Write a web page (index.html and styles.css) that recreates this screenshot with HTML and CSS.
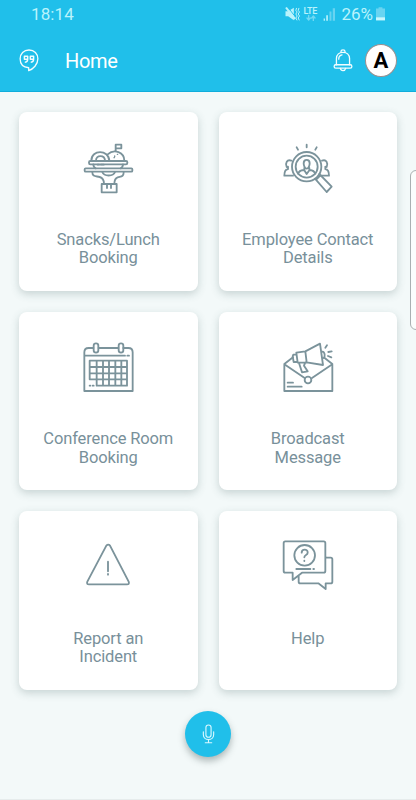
FILE: index.html
```html
<!DOCTYPE html>
<html lang="en">

<head>
    <meta charset="UTF-8">
    <meta name="viewport" content="width=device-width, initial-scale=1.0">
    <title>Home</title>
    <link rel="stylesheet" href="styles.css">
</head>

<body>
    <header class="header">
        <div class="status">
            <span class="time">18:14</span>
            <svg class="mute" viewBox="0 0 44 42">
                <path class="solid" d="M1 13h8L26 2v38L9 28H1z" />
                <path class="slash" d="M8 1l26 33" />
                <path class="solid" d="M0 3l5-3 27 34-5 4z" />
                <path d="M34 4l-2 6 4 5-4 6 4 6-4 6 3 6M41 4l-2 6 4 5-4 6 4 6-4 6 3 6" />
            </svg>
            <div class="network">
                <span>LTE</span>
                <svg viewBox="0 0 30 18">
                    <path d="M8 1v13M3 9l5 6 5-6M22 17V4M17 9l5-6 5 6" />
                </svg>
            </div>
            <svg class="signal" viewBox="0 0 38 40">
                <path d="M1 32h4v7H1zM9 22h5v17H9z" />
                <path class="dim" d="M19 11h6v28h-6zM29 1h7v38h-7z" />
            </svg>
            <span class="percent">26%</span>
            <svg class="battery" viewBox="0 0 28 42">
                <path class="dim" d="M8 0h12v4h8v27H0V4h8z" />
                <path d="M0 31h28v10H0z" />
            </svg>
        </div>
        <div class="toolbar">
            <svg class="quote" viewBox="0 0 60 70">
                <path d="M30 3C14 3 3 14 3 30s10 26 26 27v9c14-5 28-19 28-36C57 14 46 3 30 3z" />
                <path class="mark" d="M26 31H16v-9h10v9c0 5-3 8-7 9M44 31H34v-9h10v9c0 5-3 8-7 9" />
            </svg>
            <h1>Home</h1>
            <svg class="bell" viewBox="0 0 60 70">
                <path d="M10 48V29c0-12 9-19 20-19s20 7 20 19v19M24 10V7c0-6 12-6 12 0v3M17 31c0-8 4-12 10-13M22 59c2 9 14 9 16 0" />
                <rect x="3" y="48" width="54" height="10" rx="5" />
            </svg>
            <div class="avatar">A</div>
        </div>
    </header>

    <main class="cards">
        <div class="card">
            <svg class="icon" viewBox="0 0 228 228">
                <path d="M137 62V44h17v11h-17M64 92c0-34 52-34 54 0M78 92c0-18 26-18 27 0M113 73c20-18 50-6 50 19" />
                <rect x="57" y="93" width="115" height="10" rx="4" />
                <path d="M70 103c0 8 3 10 7 12M159 103c0 8-3 10-7 12M83 104h4M93 104h8" />
                <rect x="44" y="115" width="143" height="10" rx="3" />
                <path d="M67 127c0 14 11 11 22 14 10 3 13 10 13 21M161 127c0 14-8 12-18 15-8 3-10 9-10 20M97 126c5 14 33 14 38 0M95 162h45v25H95zM111 163v11M123 163v11" />
                <path class="dots" d="M134 78v2M142 73h1M132 83h1" />
            </svg>
            <p>Snacks/Lunch<br>Booking</p>
        </div>
        <div class="card">
            <svg class="icon" viewBox="0 0 228 228">
                <circle cx="110" cy="110" r="44" />
                <circle cx="110" cy="110" r="33" />
                <path d="M110 44v8M80 52l4 7M140 52l-4 7" />
                <path d="M101 100c0-14 18-14 18 0 0 8-4 16-9 16s-9-8-9-16zM103 114v7l7 11 8-11v-7M101 120c-9 1-15 5-17 11M119 120c9 1 15 5 17 11" />
                <path d="M64 92c-13-5-19 7-14 19M54 110v7c-8 1-11 7-11 20h26M156 92c13-5 19 7 14 19M166 110v7c8 1 11 7 11 20h-24" />
                <path d="M148 132l37 38-15 16-35-40M140 147l9-9" />
            </svg>
            <p>Employee Contact<br>Details</p>
        </div>
        <div class="card">
            <svg class="icon" viewBox="0 0 228 228">
                <path d="M70 54H56q-13 0-13 13v116h145V67q0-13-13-13h-15M86 54h59M43 77h122M172 77h5" />
                <rect x="71" y="40" width="14" height="28" rx="7" />
                <rect x="146" y="40" width="14" height="28" rx="7" />
                <path d="M59 148V92h112v75H80V92M99 92v75M117 92v75M136 92v75M154 92v75M59 111h112M59 130h112M59 148h112M59 167h2M68 167h3" />
            </svg>
            <p>Conference Room<br>Booking</p>
        </div>
        <div class="card">
            <svg class="icon" viewBox="0 0 228 228">
                <path d="M69 82L43 102v81h144v-81l-23-18M43 103l61 41M187 103l-61 41" />
                <circle cx="114" cy="150" r="10" />
                <path d="M79 68l27-4 44-23 9 64-49-8-27 1zM106 64l4 33M79 74h-9l-2 5 3 17h11M87 99l9 28 17-3-11-17 4-10M157 65c8 1 9 15 4 19M166 53l5-7M175 66l10-2M174 78l10 4M53 158h16M53 170h42" />
            </svg>
            <p>Broadcast<br>Message</p>
        </div>
        <div class="card">
            <svg class="icon" viewBox="0 0 228 228">
                <path d="M109 50L52 158q-3 8 5 8h114q8 0 5-8L120 50q-5-6-11 0z" />
                <path d="M114 98v29M114 135v2" />
            </svg>
            <p>Report an<br>Incident</p>
        </div>
        <div class="card">
            <svg class="icon" viewBox="0 0 228 228">
                <path d="M46 37h115q5 0 5 5v84q0 5-5 5H96l-28 22v-22H46q-5 0-5-5V42q0-5 5-5zM169 86h13q5 0 5 5v67q0 5-5 5h-15v17l-22-17H91q-5 0-5-5v-19" />
                <circle cx="104" cy="79" r="31" />
                <path d="M95 71c0-12 19-12 18 0 0 8-10 6-10 14M103 95v1M79 120h42M130 120h2" />
            </svg>
            <p>Help</p>
        </div>
    </main>

    <footer class="footer">
        <button class="mic" aria-label="Voice">
            <svg viewBox="0 0 40 62">
                <rect x="12" y="3" width="16" height="38" rx="8" />
                <path d="M4 24v9c0 20 32 20 32 0v-9M20 48v9M10 58h20" />
            </svg>
        </button>
    </footer>

    <div class="edge-handle"></div>
</body>

</html>
```
FILE: styles.css
```css
* {
    box-sizing: border-box;
}

body {
    margin: 0;
    height: 800px;
    overflow: hidden;
    position: relative;
    background-color: #f3f9f9;
    border-bottom: 1px solid #e6ecec;
    font-family: Roboto, "Liberation Sans", sans-serif;
    display: flex;
    flex-direction: column;
}

svg {
    display: block;
    fill: none;
    stroke-linecap: round;
    stroke-linejoin: round;
}

.header {
    height: 92px;
    background-color: #20bfea;
    border-bottom: 1px solid #10addb;
    color: #ffffff;
}

.status {
    height: 28px;
    padding: 0 31px;
    display: flex;
    align-items: center;
    color: #b9f3fc;
    font-size: 17px;
}

.time {
    margin-right: auto;
    letter-spacing: 0.1px;
}

.mute {
    width: 15px;
    height: 14px;
    margin-right: 3px;
    stroke: #b9f3fc;
    stroke-width: 3;
}

.mute .solid {
    fill: #b9f3fc;
    stroke: none;
}

.mute .slash {
    stroke: #20bfea;
    stroke-width: 3;
}

.network {
    width: 16px;
    margin-right: 4px;
    font-size: 9px;
    font-weight: 500;
    line-height: 8px;
    letter-spacing: -0.2px;
}

.network span {
    display: block;
}

.network svg {
    width: 10px;
    height: 6px;
    margin: 0 0 0 3px;
    stroke: #71d9f3;
    stroke-width: 4;
}

.signal {
    width: 13px;
    height: 13px;
    margin-right: 5px;
    fill: #b9f3fc;
}

.percent {
    margin-right: 3px;
}

.battery {
    width: 9px;
    height: 14px;
    fill: #c9f7fd;
}

.signal .dim,
.battery .dim {
    fill: #68d4f1;
}

.toolbar {
    height: 64px;
    padding: 1px 19px 0;
    display: flex;
    align-items: center;
}

.quote,
.bell {
    width: 20px;
    height: 23px;
    stroke: #f2fdff;
    stroke-width: 4;
}

.quote .mark {
    stroke-width: 4.5;
}

.toolbar h1 {
    margin: 1px auto 0 26px;
    font-size: 20px;
    font-weight: 400;
    letter-spacing: -0.3px;
}

.avatar {
    width: 32px;
    height: 33px;
    margin-left: 12px;
    border: 1px solid #9a8f8f;
    border-radius: 50%;
    background-color: #ffffff;
    color: #000000;
    font-size: 22px;
    font-weight: 700;
    line-height: 32px;
    text-align: center;
}

.cards {
    display: grid;
    grid-template-columns: 178.5px 178.5px;
    grid-auto-rows: 178.5px;
    gap: 21px;
    padding: 20px 19px 0;
}

.card {
    padding-top: 18px;
    background-color: #ffffff;
    border-radius: 8px;
    box-shadow: 0 3px 8px rgba(60, 90, 90, 0.24);
    text-align: center;
}

.icon {
    width: 76px;
    height: 76px;
    margin: 0 auto;
    stroke: #7b939b;
    stroke-width: 5.5;
}

.dots {
    stroke-width: 4;
}

.card p {
    margin: 24.8px 0 0;
    color: #78909a;
    font-size: 16.5px;
    line-height: 18.5px;
    letter-spacing: -0.13px;
}

.footer {
    margin-top: 21px;
    display: flex;
    justify-content: center;
}

.mic {
    width: 46px;
    height: 46px;
    padding: 0;
    border: none;
    border-radius: 50%;
    background-color: #20bfea;
    box-shadow: 0 4px 7px rgba(40, 60, 60, 0.35);
    display: flex;
    justify-content: center;
    align-items: center;
}

.mic svg {
    width: 13px;
    height: 20px;
    stroke: #d9f8ff;
    stroke-width: 3.5;
}

/* side panel handle sitting over the right edge */
.edge-handle {
    position: absolute;
    top: 170px;
    right: -6px;
    width: 12px;
    height: 160px;
    border: 1px solid #a9b0b2;
    border-radius: 6px;
    background-color: #fbfdfd;
}
```
